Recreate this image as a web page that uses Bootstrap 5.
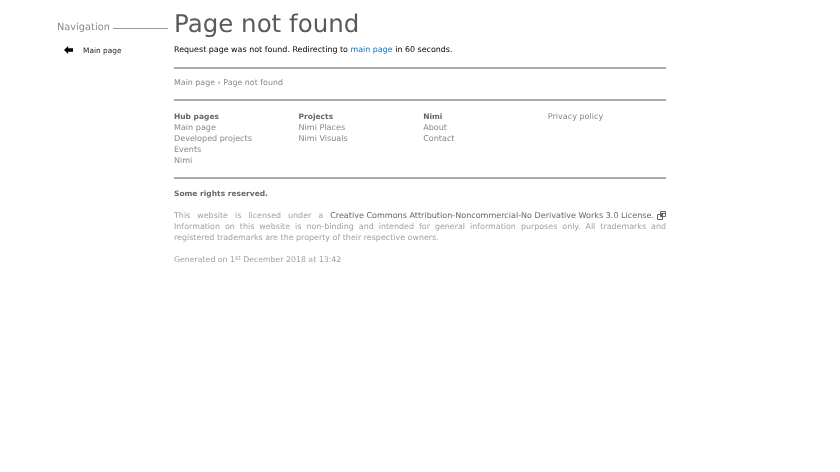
<!DOCTYPE html>
<html lang="en">
<head>
<meta charset="utf-8">
<title>Page not found</title>
<link href="https://cdn.jsdelivr.net/npm/bootstrap@5.3.0/dist/css/bootstrap.min.css" rel="stylesheet">
<style>
body{font-family:"DejaVu Sans",sans-serif;font-size:7.95px;line-height:11px;color:#000;background:#fff;text-rendering:geometricPrecision}
.shell{width:609px;margin-left:57px;will-change:transform}
.side{width:111px;margin-right:6px;flex:none}
.side-head{font-size:9.8px;line-height:13px;color:#888;margin-top:21px}
.side-rule{height:1px;background:#999;margin-left:3px;margin-top:1px}
.side-link{margin-top:10.5px;padding-left:7px;color:#222;font-size:7.4px}
.side-link svg{margin-right:10px}
.mainbox{width:492px;flex:none}
.page-title{font-size:24.5px;line-height:28px;color:#5a5a5a;font-weight:400;margin:10px 0 0}
.intro{margin:6px 0 0;line-height:12px}
.intro a{color:#0a74c8;text-decoration:none}
.sep{height:2px;background:#aaa;opacity:1;border:0;margin:0}
.sep-a{margin-top:11px}
.sep-b{margin-top:11px}
.crumbs{color:#888;padding:8px 0 11px;font-size:7.9px}
.crumbs a,.fcol a{color:inherit;text-decoration:none}
.flinks{padding-top:10px}
.fcol{width:124.6px;color:#888;flex:none;font-size:8.05px}
.fcol strong{color:#666;display:block;font-weight:700;font-size:7.5px}
.fcol a{display:block}
.rights{font-weight:700;color:#666;font-size:7.5px;margin:9px 0 0}
.legal{color:#a0a0a0;text-align:justify;margin:11px 0 0}
.legal a{color:#666;text-decoration:none;font-size:8.05px}
.legal svg{margin-left:3px}
.gen{color:#a0a0a0;margin:11px 0 0;font-size:7.8px}
.gen sup{font-size:6.2px;line-height:0;top:-.3em}
</style>
</head>
<body>
<div class="shell d-flex align-items-start">
  <nav class="side">
    <div class="side-head d-flex align-items-center">Navigation<span class="side-rule flex-grow-1"></span></div>
    <div class="side-link d-flex align-items-center">
      <svg width="9" height="8" viewBox="0 0 9 8"><path d="M0 4 4.2 0V2.2H9V5.8H4.2V8Z" fill="#000"/></svg>
      <span>Main page</span>
    </div>
  </nav>
  <main class="mainbox">
    <h1 class="page-title">Page not found</h1>
    <p class="intro">Request page was not found. Redirecting to <a href="#">main page</a> in 60 seconds.</p>
    <hr class="sep sep-a">
    <div class="crumbs"><a href="#">Main page</a> › Page not found</div>
    <hr class="sep">
    <div class="d-flex flinks">
      <div class="fcol"><strong>Hub pages</strong><a href="#">Main page</a><a href="#">Developed projects</a><a href="#">Events</a><a href="#">Nimi</a></div>
      <div class="fcol"><strong>Projects</strong><a href="#">Nimi Places</a><a href="#">Nimi Visuals</a></div>
      <div class="fcol"><strong>Nimi</strong><a href="#">About</a><a href="#">Contact</a></div>
      <div class="fcol"><a href="#">Privacy policy</a></div>
    </div>
    <hr class="sep sep-b">
    <p class="rights">Some rights reserved.</p>
    <p class="legal">This website is licensed under a <a href="#" class="d-inline-block">Creative Commons Attribution-Noncommercial-No Derivative Works 3.0 License.<svg width="9" height="9" viewBox="0 0 9 9" class="align-text-bottom"><path d="M3.5.5h5v5h-5zM.5 3.5h5v5h-5z" fill="#fff" stroke="#666"/><path d="M4 2.5h4M3 6l3-3" stroke="#666"/></svg></a>
      Information on this website is non-binding and intended for general information purposes only. All trademarks and registered trademarks are the property of their respective owners.</p>
    <p class="gen">Generated on 1<sup>st</sup> December 2018 at 13:42</p>
  </main>
</div>
<script src="https://cdn.jsdelivr.net/npm/bootstrap@5.3.0/dist/js/bootstrap.bundle.min.js"></script>
</body>
</html>
